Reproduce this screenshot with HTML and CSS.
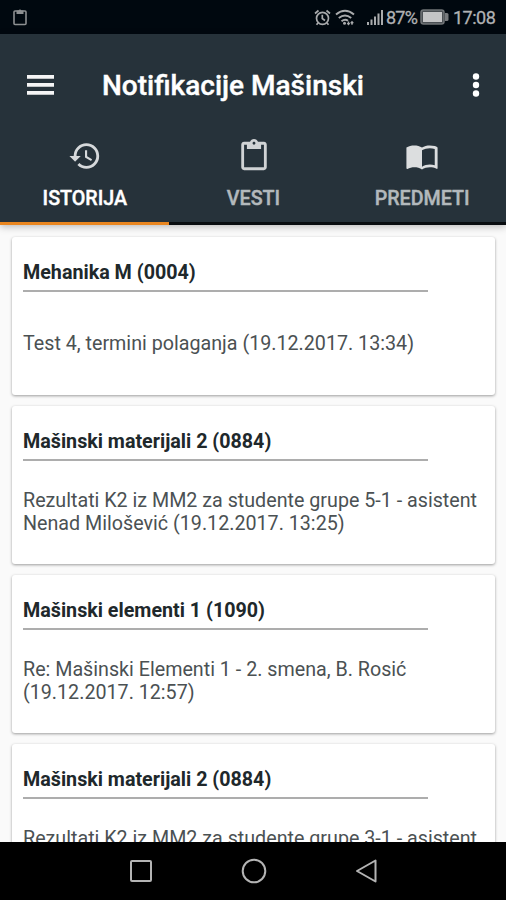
FILE: index.html
```html
<!DOCTYPE html>
<html lang="sr-Latn">
<head>
<meta charset="utf-8">
<title>Notifikacije Mašinski</title>
<link rel="stylesheet" href="styles.css">
</head>
<body>
<div class="screen">
  <div class="status">
    <svg class="status-clip" width="16" height="17" viewBox="0 0 16 17"><path d="M3 2h10q1 0 1 1v11.500q0 1-1 1H3q-1 0-1-1V3q0-1 1-1z" fill="none" stroke="#8c8f91" stroke-width="1.600"/><path d="M4.500 1.500h2a1.700 1.700 0 0 1 3 0h2V5h-7z" fill="#8c8f91"/></svg>
    <div class="status-right">
      <svg class="alarm" width="17" height="17" viewBox="0 0 17 17" fill="none" stroke="#a9abad" stroke-width="1.700"><circle cx="8.500" cy="9.300" r="6"/><path d="M8.300 5.800v3.700l2.700 2M1 4.500L4.500 1.500M16 4.500L12.500 1.500M4 14l-1.500 1.800M13 14l1.500 1.800"/></svg>
      <svg class="wifi" width="20" height="17" viewBox="0 0 20 17" fill="none" stroke="#a9abad" stroke-width="2"><path d="M1 5.500q9-7.500 18 0M3.800 9q6.200-5 12.400 0M6.500 12.200q3.500-2.800 6.500-.5"/><circle cx="9.500" cy="14.300" r="1.500" fill="#a9abad" stroke="none"/><path d="M13.500 12.500v3M12.300 14l1.200 1.500 1.200-1.500M17 15.800v-3M15.800 14.300l1.200-1.500 1.200 1.500" stroke-width="1.400"/></svg>
      <svg class="signal" width="17" height="17" viewBox="0 0 17 17" fill="#a9abad"><path d="M0 13h2v3H0zM3.500 10.500h2V16h-2zM7 7.500h2V16H7zM10.500 4.500h2V16h-2zM14 1h2v15h-2z"/></svg>
      <span class="percent">87%</span>
      <svg class="battery" width="29" height="16" viewBox="0 0 29 16"><rect x="1" y="1" width="23" height="14" rx="2.500" fill="#4b5054" stroke="#6f7376" stroke-width="1.500"/><rect x="3" y="3" width="19" height="10" fill="#c4c5c6"/><path d="M25 4h2q1.500 0 1.500 1.500v5Q28.500 12 27 12h-2z" fill="#777a7d"/></svg>
      <span class="clock">17:08</span>
    </div>
  </div>
  <header class="header">
    <div class="appbar">
      <svg class="menu" width="27" height="21" viewBox="0 0 27 21" fill="#f5f5f5"><path d="M0 0h27v3.800H0zM0 8h27v3.800H0zM0 16h27v3.800H0z"/></svg>
      <h1 class="title">Notifikacije Mašinski</h1>
      <svg class="more" width="8" height="26" viewBox="0 0 8 26" fill="#fff"><circle cx="4" cy="4.500" r="3.200"/><circle cx="4" cy="13" r="3.200"/><circle cx="4" cy="21.500" r="3.200"/></svg>
    </div>
    <nav class="tabs">
      <div class="tab active">
        <svg width="34" height="34" viewBox="0 0 24 24" fill="#d6d9db"><path d="M13 3a9 9 0 0 0-9 9H1l3.890 3.890.07.14L9 12H6c0-3.870 3.130-7 7-7s7 3.130 7 7-3.130 7-7 7c-1.930 0-3.680-.79-4.940-2.060l-1.420 1.420A8.954 8.954 0 0 0 13 21a9 9 0 0 0 0-18zm-1 5v5l4.280 2.540.72-1.210-3.500-2.080V8H12z"/></svg>
        <span class="tab-label">ISTORIJA</span>
      </div>
      <div class="tab">
        <svg width="34" height="34" viewBox="0 0 24 24" fill="#d0d3d5"><path d="M19 2h-4.180C14.400.84 13.300 0 12 0c-1.300 0-2.400.84-2.820 2H5c-1.100 0-2 .9-2 2v16c0 1.100.9 2 2 2h14c1.100 0 2-.9 2-2V4c0-1.100-.9-2-2-2zm-7 0c.55 0 1 .45 1 1s-.45 1-1 1-1-.45-1-1 .45-1 1-1zm7 18H5V4h2v3h10V4h2v16z"/></svg>
        <span class="tab-label">VESTI</span>
      </div>
      <div class="tab">
        <svg width="34" height="34" viewBox="0 0 24 24" fill="#dcdedf"><path d="M21 5c-1.110-.35-2.330-.5-3.500-.5-1.950 0-4.050.4-5.500 1.500-1.450-1.100-3.550-1.500-5.500-1.500S2.450 4.900 1 6v14.650c0 .25.25.5.5.5.1 0 .15-.05.25-.05C3.100 20.450 5.050 20 6.500 20c1.950 0 4.050.4 5.500 1.500 1.350-.85 3.800-1.500 5.500-1.500 1.650 0 3.350.3 4.750 1.050.1.050.15.050.25.050.25 0 .5-.25.5-.5V6c-.6-.45-1.250-.75-2-1zm0 13.500c-1.100-.35-2.300-.5-3.500-.5-1.700 0-4.150.65-5.500 1.500V8c1.350-.85 3.800-1.500 5.500-1.500 1.200 0 2.400.15 3.500.5v11.500z"/></svg>
        <span class="tab-label">PREDMETI</span>
      </div>
    </nav>
  </header>
  <main class="list">
    <article class="card">
      <h2>Mehanika M (0004)</h2>
      <div class="body"><p>Test 4, termini polaganja (19.12.2017. 13:34)</p></div>
    </article>
    <article class="card">
      <h2>Mašinski materijali 2 (0884)</h2>
      <div class="body"><p>Rezultati K2 iz MM2 za studente grupe 5-1 - asistent<br>Nenad Milošević (19.12.2017. 13:25)</p></div>
    </article>
    <article class="card">
      <h2>Mašinski elementi 1 (1090)</h2>
      <div class="body"><p>Re: Mašinski Elementi 1 - 2. smena, B. Rosić<br>(19.12.2017. 12:57)</p></div>
    </article>
    <article class="card">
      <h2>Mašinski materijali 2 (0884)</h2>
      <div class="body last"><p>Rezultati K2 iz MM2 za studente grupe 3-1 - asistent</p></div>
    </article>
  </main>
  <footer class="navbar">
    <svg width="24" height="24" viewBox="0 0 24 24" fill="none" stroke="#b4b4b4" stroke-width="2"><rect x="2" y="2" width="20" height="20" rx="1"/></svg>
    <svg width="26" height="26" viewBox="0 0 26 26" fill="none" stroke="#b4b4b4" stroke-width="2"><circle cx="13" cy="13" r="11.300"/></svg>
    <svg width="24" height="26" viewBox="0 0 24 26" fill="none" stroke="#b4b4b4" stroke-width="2" stroke-linejoin="round"><path d="M20.500 2.500v21L2 13z"/></svg>
  </footer>
</div>
</body>
</html>
```
FILE: styles.css
```css
* { box-sizing: border-box; }
body { margin: 0; font-family: Roboto, "Liberation Sans", sans-serif; }
h1, h2, p { margin: 0; white-space: nowrap; }
svg { display: block; flex: none; }

.screen {
  width: 506px;
  height: 900px;
  display: flex;
  flex-direction: column;
  overflow: hidden;
  background: #fafafa;
}

.status {
  flex: none;
  height: 34px;
  display: flex;
  align-items: center;
  justify-content: space-between;
  padding: 0 11px 0 12px;
  background: #00080f;
  color: #b0b2b4;
}
.status-right { display: flex; align-items: center; }
.wifi { margin-left: 4px; }
.signal { margin-left: 12px; }
.percent { font-size: 18px; margin-left: 2px; width: 31px; letter-spacing: -0.8px; -webkit-text-stroke: 0.3px; }
.battery { margin-left: 3px; }
.clock { font-size: 18px; margin-left: 4px; width: 42px; letter-spacing: -0.5px; white-space: nowrap; -webkit-text-stroke: 0.3px; }

.header {
  flex: none;
  height: 191px;
  display: flex;
  flex-direction: column;
  background: #26323a;
  box-shadow: 0 2px 7px rgba(0, 0, 0, 0.25);
  z-index: 1;
}
.appbar {
  height: 102px;
  display: flex;
  align-items: center;
  padding: 0 26px 0 27px;
}
.title {
  flex: 1;
  margin-left: 48px;
  padding-top: 2px;
  font-size: 28px;
  font-weight: 500;
  line-height: 36px;
  color: #fff;
  -webkit-text-stroke: 0.4px;
}
.tabs { flex: 1; display: flex; }
.tab {
  flex: 1;
  display: flex;
  flex-direction: column;
  align-items: center;
  padding: 3px 0 0 1px;
  border-bottom: 3px solid #090d10;
  color: #b3b9bc;
}
.tab.active { border-bottom-color: #e98620; color: #fff; }
.tab-label {
  margin-top: 14px;
  font-size: 19.7px;
  font-weight: 500;
  line-height: 24px;
  -webkit-text-stroke: 0.4px;
}

.list {
  flex: 1;
  min-height: 0;
  overflow: hidden;
  display: flex;
  flex-direction: column;
  gap: 11px;
  padding: 12px 11px 0 12px;
}
.card {
  flex: none;
  height: 158px;
  display: flex;
  flex-direction: column;
  padding: 23px 11px 0;
  background: #fff;
  border-radius: 3px;
  box-shadow: 0 1px 3px rgba(0, 0, 0, 0.38);
}
.card h2 {
  flex: none;
  width: 405px;
  height: 32px;
  border-bottom: 2px solid #adadad;
  font-size: 19.7px;
  font-weight: 700;
  line-height: 25px;
  color: #20282b;
}
.body {
  height: 102px;
  display: flex;
  align-items: center;
}
.body.last { align-items: flex-start; padding-top: 28px; }
.body p {
  font-size: 19.7px;
  line-height: 23px;
  color: #4b5153;
}

.navbar {
  flex: none;
  height: 58px;
  display: flex;
  align-items: center;
  justify-content: center;
  gap: 88px;
  padding-left: 2px;
  background: #000;
}
```
